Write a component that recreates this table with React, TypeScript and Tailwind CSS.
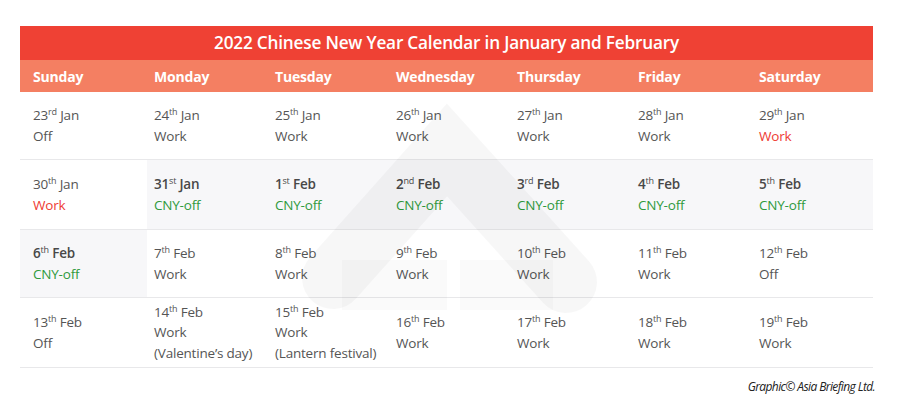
type Cell = {
  n: string;
  sup: string;
  m: string;
  status: string;
  note?: string;
  kind: "work" | "off" | "red" | "cny";
};

const rows: Cell[][] = [
  [
    { n: "23", sup: "rd", m: "Jan", status: "Off", kind: "off" },
    { n: "24", sup: "th", m: "Jan", status: "Work", kind: "work" },
    { n: "25", sup: "th", m: "Jan", status: "Work", kind: "work" },
    { n: "26", sup: "th", m: "Jan", status: "Work", kind: "work" },
    { n: "27", sup: "th", m: "Jan", status: "Work", kind: "work" },
    { n: "28", sup: "th", m: "Jan", status: "Work", kind: "work" },
    { n: "29", sup: "th", m: "Jan", status: "Work", kind: "red" },
  ],
  [
    { n: "30", sup: "th", m: "Jan", status: "Work", kind: "red" },
    { n: "31", sup: "st", m: "Jan", status: "CNY-off", kind: "cny" },
    { n: "1", sup: "st", m: "Feb", status: "CNY-off", kind: "cny" },
    { n: "2", sup: "nd", m: "Feb", status: "CNY-off", kind: "cny" },
    { n: "3", sup: "rd", m: "Feb", status: "CNY-off", kind: "cny" },
    { n: "4", sup: "th", m: "Feb", status: "CNY-off", kind: "cny" },
    { n: "5", sup: "th", m: "Feb", status: "CNY-off", kind: "cny" },
  ],
  [
    { n: "6", sup: "th", m: "Feb", status: "CNY-off", kind: "cny" },
    { n: "7", sup: "th", m: "Feb", status: "Work", kind: "work" },
    { n: "8", sup: "th", m: "Feb", status: "Work", kind: "work" },
    { n: "9", sup: "th", m: "Feb", status: "Work", kind: "work" },
    { n: "10", sup: "th", m: "Feb", status: "Work", kind: "work" },
    { n: "11", sup: "th", m: "Feb", status: "Work", kind: "work" },
    { n: "12", sup: "th", m: "Feb", status: "Off", kind: "off" },
  ],
  [
    { n: "13", sup: "th", m: "Feb", status: "Off", kind: "off" },
    { n: "14", sup: "th", m: "Feb", status: "Work", note: "(Valentine’s day)", kind: "work" },
    { n: "15", sup: "th", m: "Feb", status: "Work", note: "(Lantern festival)", kind: "work" },
    { n: "16", sup: "th", m: "Feb", status: "Work", kind: "work" },
    { n: "17", sup: "th", m: "Feb", status: "Work", kind: "work" },
    { n: "18", sup: "th", m: "Feb", status: "Work", kind: "work" },
    { n: "19", sup: "th", m: "Feb", status: "Work", kind: "work" },
  ],
];

const days = ["Sunday", "Monday", "Tuesday", "Wednesday", "Thursday", "Friday", "Saturday"];

// faint house logo behind the middle of the table
const Watermark = () => (
  <svg
    className="pointer-events-none absolute left-0 top-0"
    width="900"
    height="412"
    viewBox="0 0 900 412"
  >
    <path
      d="M333 278 L447 150 L566 282"
      fill="none"
      stroke="rgba(0,0,0,0.032)"
      strokeWidth="62"
      strokeLinecap="round"
      strokeLinejoin="miter"
    />
    <rect x="342" y="260" width="105" height="50" fill="rgba(0,0,0,0.02)" />
    <rect x="460" y="260" width="93" height="50" fill="rgba(0,0,0,0.02)" />
  </svg>
);

const DayCell = ({ c, first }: { c: Cell; first: boolean }) => {
  const statusColor =
    c.kind === "cny" ? "text-[#2f9a3c]" : c.kind === "red" ? "text-[#ee3a33]" : "text-[#555]";
  return (
    <div
      className={`flex flex-col justify-center leading-[20.5px] ${first ? "pl-[13px]" : "pl-[7px]"} ${
        c.kind === "cny" ? "bg-[#f7f7f9]" : ""
      }`}
    >
      <div className={c.kind === "cny" ? "font-semibold text-[#484848]" : "text-[#555]"}>
        {c.n}
        <sup className="-top-[5px] text-[9px] font-normal">{c.sup}</sup> {c.m}
      </div>
      <div className={statusColor}>{c.status}</div>
      {c.note && <div className="text-[#555]">{c.note}</div>}
    </div>
  );
};

export default function App() {
  return (
    <div
      className="relative h-[412px] w-[900px] bg-white pt-[26px] pl-[20px] text-[13.5px] tracking-[-0.2px]"
      style={{ fontFamily: '"Open Sans", "Liberation Sans", sans-serif' }}
    >
      <div className="w-[853px]">
        <div className="flex h-[34px] items-center justify-center bg-[#ef4134] text-[17.2px] font-semibold text-white">
          2022 Chinese New Year Calendar in January and February
        </div>
        <div className="grid h-[32px] grid-cols-[127px_repeat(6,121px)] items-center bg-[#f47f62] text-[14px] font-bold text-white">
          {days.map((d, i) => (
            <div key={d} className={i === 0 ? "pl-[13px]" : "pl-[7px]"}>
              {d}
            </div>
          ))}
        </div>
        {rows.map((r, i) => (
          <div
            key={i}
            className={`grid grid-cols-[127px_repeat(6,121px)] border-b border-[#e8e8ea] ${
              i === 0 ? "h-[68px]" : i === 1 ? "h-[70px]" : i === 2 ? "h-[68px]" : "h-[70px]"
            }`}
          >
            {r.map((c, j) => (
              <DayCell key={j} c={c} first={j === 0} />
            ))}
          </div>
        ))}
        <div className="flex justify-end pt-[10px]">
          <span className="mr-[-2px] text-[12px] italic tracking-[-0.6px] text-[#222]">
            Graphic© Asia Briefing Ltd.
          </span>
        </div>
      </div>
      <Watermark />
    </div>
  );
}
